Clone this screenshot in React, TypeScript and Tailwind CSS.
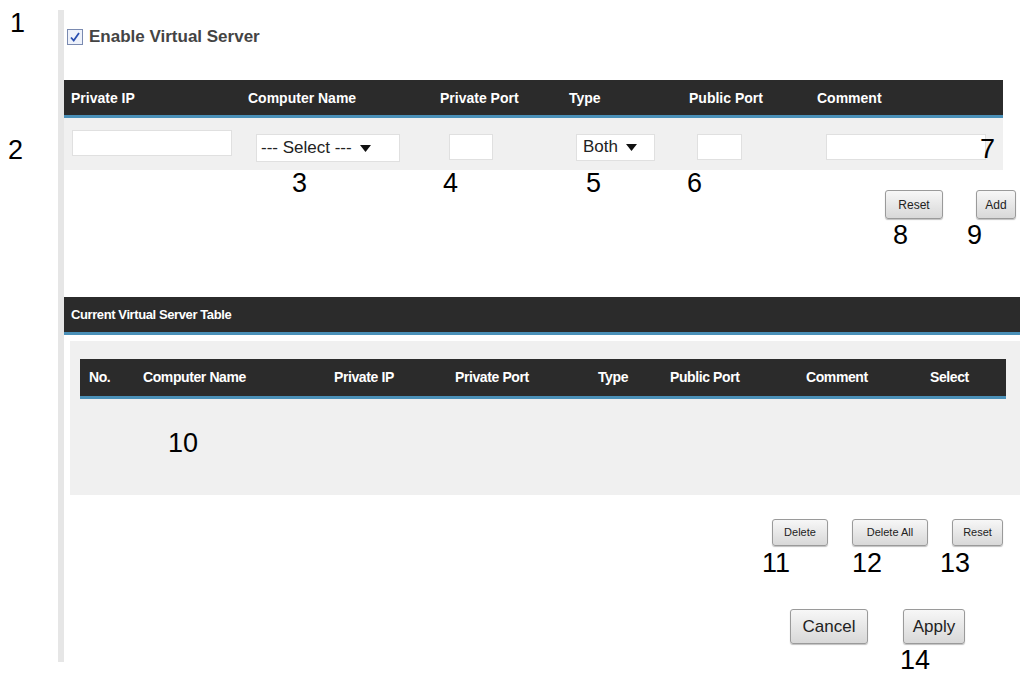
import React from "react";

const Num = ({ x, y, n }: { x: number; y: number; n: string }) => (
  <div className="absolute text-[27px] leading-none text-black" style={{ left: x, top: y, fontFamily: "Liberation Sans, Arial, sans-serif" }}>{n}</div>
);

const Btn = ({ children, cls }: { children: React.ReactNode; cls: string }) => (
  <button className={"rounded-[3px] border border-[#9a9a9a] bg-gradient-to-b from-[#f7f7f7] to-[#d8d8d8] text-[#222] shadow-[0_1px_1px_rgba(0,0,0,0.25)] " + cls}>{children}</button>
);

const Arrow = () => (
  <svg width="11" height="7" viewBox="0 0 11 7" className="ml-2 inline-block"><path d="M0 0h11L5.5 7z" fill="#111" /></svg>
);

export default function App() {
  const hd = "bg-[#2b2b2b] text-white font-bold border-b-[3px] border-[#4a90b8]";
  return (
    <div className="relative w-[1029px] h-[679px] bg-white overflow-hidden" style={{ fontFamily: "Liberation Sans, Arial, sans-serif" }}>
      <div className="absolute left-[58px] top-[10px] w-[6px] h-[652px] bg-[#e6e6e6]" />
      <div className="pl-[64px] pt-[26px]">
        <div className="flex items-center gap-[6px] h-[22px] ml-[3px]">
          <div className="w-[16px] h-[16px] border border-[#7a8ab0] bg-[#eef2fb] flex items-center justify-center">
            <svg width="12" height="12" viewBox="0 0 12 12"><path d="M2 6.5l2.7 3L10 2" stroke="#2a4fb0" strokeWidth="1.8" fill="none" /></svg>
          </div>
          <span className="text-[17px] font-bold text-[#444]">Enable Virtual Server</span>
        </div>
        <div className="w-[939px] mt-[32px]">
          <div className={hd + " h-[38px] flex items-center text-[14px] text-[#eee] pt-[2px]"}>
            <span className="ml-[7px] w-[177px]">Private IP</span>
            <span className="w-[192px]">Computer Name</span>
            <span className="w-[129px]">Private Port</span>
            <span className="w-[120px]">Type</span>
            <span className="w-[128px]">Public Port</span>
            <span>Comment</span>
          </div>
          <div className="bg-[#f0f0f0] h-[52px] flex items-center">
            <div className="ml-[8px] w-[160px] h-[26px] bg-white border border-[#e0e0e0] -mt-[2px]" />
            <div className="ml-[24px] w-[144px] h-[28px] bg-white border border-[#e0e0e0] flex items-center pl-[4px] text-[17px] text-[#222] mt-[8px]">--- Select ---<Arrow /></div>
            <div className="ml-[49px] w-[44px] h-[26px] bg-white border border-[#e0e0e0] mt-[6px]" />
            <div className="ml-[83px] w-[79px] h-[27px] bg-white border border-[#e0e0e0] flex items-center pl-[6px] text-[17px] text-[#222] mt-[6px]">Both<Arrow /></div>
            <div className="ml-[42px] w-[45px] h-[26px] bg-white border border-[#e0e0e0] mt-[6px]" />
            <div className="ml-[84px] w-[160px] h-[26px] bg-white border border-[#e0e0e0] mt-[6px]" />
          </div>
        </div>
        <div className="flex justify-end w-[952px] mt-[20px] gap-[33px]">
          <Btn cls="w-[58px] h-[29px] text-[12px]">Reset</Btn>
          <Btn cls="w-[40px] h-[29px] text-[12px]">Add</Btn>
        </div>
        <div className={hd + " mt-[78px] w-[956px] h-[38px] flex items-center text-[13px] pl-[7px] tracking-[-0.4px]"}>Current Virtual Server Table</div>
        <div className="ml-[6px] mt-[6px] w-[950px] h-[154px] bg-[#f0f0f0] pt-[18px]">
          <div className={hd + " ml-[10px] w-[926px] h-[40px] flex items-center text-[14px] tracking-[-0.4px]"}>
            <span className="ml-[9px] w-[54px]">No.</span>
            <span className="w-[191px]">Computer Name</span>
            <span className="w-[121px]">Private IP</span>
            <span className="w-[143px]">Private Port</span>
            <span className="w-[72px]">Type</span>
            <span className="w-[136px]">Public Port</span>
            <span className="w-[124px]">Comment</span>
            <span>Select</span>
          </div>
        </div>
        <div className="flex w-[939px] justify-end mt-[24px] gap-[24px]">
          <Btn cls="w-[56px] h-[27px] text-[11px]">Delete</Btn>
          <Btn cls="w-[76px] h-[27px] text-[11px]">Delete All</Btn>
          <Btn cls="w-[51px] h-[27px] text-[11px]">Reset</Btn>
        </div>
        <div className="flex w-[901px] justify-end mt-[63px] gap-[35px]">
          <Btn cls="w-[78px] h-[35px] text-[17px]">Cancel</Btn>
          <Btn cls="w-[62px] h-[35px] text-[17px]">Apply</Btn>
        </div>
      </div>
      <Num x={10} y={10} n="1" />
      <Num x={8} y={137} n="2" />
      <Num x={292} y={170} n="3" />
      <Num x={443} y={170} n="4" />
      <Num x={586} y={170} n="5" />
      <Num x={687} y={170} n="6" />
      <Num x={980} y={136} n="7" />
      <Num x={893} y={222} n="8" />
      <Num x={967} y={222} n="9" />
      <Num x={168} y={430} n="10" />
      <Num x={762} y={550} n="11" />
      <Num x={852} y={550} n="12" />
      <Num x={940} y={550} n="13" />
      <Num x={900} y={647} n="14" />
    </div>
  );
}
